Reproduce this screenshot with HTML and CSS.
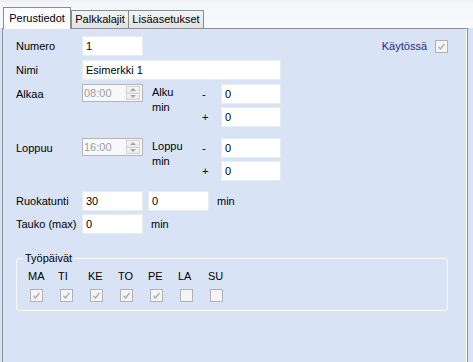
FILE: index.html
```html
<!DOCTYPE html>
<html lang="fi">
<head>
    <meta charset="UTF-8">
    <meta name="viewport" content="width=device-width, initial-scale=1.0">
    <title>Vuoro - Perustiedot</title>
    <link rel="stylesheet" href="styles.css">
</head>
<body>
    <div class="tabs">
        <div class="tab tab-active">Perustiedot</div>
        <div class="tab tab-palkka">Palkkalajit</div>
        <div class="tab tab-lisa">Lisäasetukset</div>
    </div>

    <div class="panel">
        <!-- Numero + Käytössä -->
        <div class="row row-numero">
            <span class="lbl">Numero</span>
            <div class="txt short">1</div>
            <div class="enabled">
                <span>Käytössä</span>
                <span class="chk">
                    <svg viewBox="0 0 11 11"><path d="M2.5 5.8 L4.5 8 L8.5 2.8" fill="none" stroke="#a9a9a9" stroke-width="1.3"/></svg>
                </span>
            </div>
        </div>

        <div class="row row-nimi">
            <span class="lbl">Nimi</span>
            <div class="txt long">Esimerkki 1</div>
        </div>

        <!-- Alkaa -->
        <div class="time-row time-alkaa">
            <span class="lbl">Alkaa</span>
            <div class="spin">
                <span>08:00</span>
                <div class="spin-btns">
                    <span class="spin-up"></span>
                    <span class="spin-down"></span>
                </div>
            </div>
            <div class="multi">Alku<br>min</div>
            <div class="pm">
                <div class="pm-row"><span class="sign">-</span><div class="txt mid">0</div></div>
                <div class="pm-row"><span class="sign">+</span><div class="txt mid">0</div></div>
            </div>
        </div>

        <!-- Loppuu -->
        <div class="time-row time-loppuu">
            <span class="lbl">Loppuu</span>
            <div class="spin">
                <span>16:00</span>
                <div class="spin-btns">
                    <span class="spin-up"></span>
                    <span class="spin-down"></span>
                </div>
            </div>
            <div class="multi">Loppu<br>min</div>
            <div class="pm">
                <div class="pm-row"><span class="sign">-</span><div class="txt mid">0</div></div>
                <div class="pm-row"><span class="sign">+</span><div class="txt mid">0</div></div>
            </div>
        </div>

        <div class="row row-ruoka">
            <span class="lbl">Ruokatunti</span>
            <div class="txt short">30</div>
            <div class="txt short second">0</div>
            <span class="unit">min</span>
        </div>

        <div class="row row-tauko">
            <span class="lbl">Tauko (max)</span>
            <div class="txt short">0</div>
            <span class="unit">min</span>
        </div>

        <!-- Työpäivät -->
        <div class="group">
            <span class="legend">Työpäivät</span>
            <div class="days">
                <div class="day"><span>MA</span><span class="chk"><svg viewBox="0 0 11 11"><path d="M2.5 5.8 L4.5 8 L8.5 2.8" fill="none" stroke="#a9a9a9" stroke-width="1.3"/></svg></span></div>
                <div class="day"><span>TI</span><span class="chk"><svg viewBox="0 0 11 11"><path d="M2.5 5.8 L4.5 8 L8.5 2.8" fill="none" stroke="#a9a9a9" stroke-width="1.3"/></svg></span></div>
                <div class="day"><span>KE</span><span class="chk"><svg viewBox="0 0 11 11"><path d="M2.5 5.8 L4.5 8 L8.5 2.8" fill="none" stroke="#a9a9a9" stroke-width="1.3"/></svg></span></div>
                <div class="day"><span>TO</span><span class="chk"><svg viewBox="0 0 11 11"><path d="M2.5 5.8 L4.5 8 L8.5 2.8" fill="none" stroke="#a9a9a9" stroke-width="1.3"/></svg></span></div>
                <div class="day"><span>PE</span><span class="chk"><svg viewBox="0 0 11 11"><path d="M2.5 5.8 L4.5 8 L8.5 2.8" fill="none" stroke="#a9a9a9" stroke-width="1.3"/></svg></span></div>
                <div class="day"><span>LA</span><span class="chk"></span></div>
                <div class="day"><span>SU</span><span class="chk"></span></div>
            </div>
        </div>
    </div>
</body>
</html>
```

FILE: styles.css
```css
html {
    background: #d8e4f6;
}

body {
    margin: 0;
    height: 362px;
    overflow: hidden;
    background: #d8e4f6;
    font-family: "Liberation Sans", Arial, sans-serif;
    font-size: 11px;
    color: #000;
}

/* tab strip */
.tabs {
    display: flex;
    align-items: flex-end;
    height: 28px;
    padding-left: 3px;
    background: linear-gradient(#eeeff1 0, #f3f6fa 4px, #f8fafd 28px);
}

.tab {
    box-sizing: border-box;
    height: 18px;
    line-height: 16px;
    border: 1px solid #898c95;
    border-bottom: none;
    background: linear-gradient(#f4f4f4, #e2e2e2);
    text-align: center;
}

.tab-active {
    position: relative;
    z-index: 1;
    width: 68px;
    height: 22px;
    line-height: 20px;
    margin-bottom: -1px;
    background: #fcfcfc;
}

.tab-palkka {
    width: 58px;
}

.tab-lisa {
    width: 75px;
    border-left: none;
}

/* content panel, runs to the bottom edge */
.panel {
    box-sizing: border-box;
    margin-left: 2px;
    width: 466px;
    height: 334px;
    padding: 7px 0 0 13px;
    border: 1px solid #8d9096;
    border-bottom: none;
    box-shadow: inset -1px 0 #ffffff;
}

.row {
    display: flex;
    align-items: center;
    height: 20px;
}

.row-numero,
.row-nimi {
    margin-bottom: 4px;
}

.row-ruoka {
    margin-bottom: 3px;
}

.lbl {
    width: 66px;
    flex: none;
    line-height: 20px;
    white-space: nowrap;
}

.txt {
    box-sizing: border-box;
    height: 20px;
    line-height: 18px;
    padding-left: 3px;
    border: 1px solid #e6ecf4;
    background: #ffffff;
}

.short {
    width: 61px;
}

.mid {
    width: 60px;
}

.long {
    width: 199px;
}

.second {
    margin-left: 5px;
}

.unit {
    margin-left: 8px;
}

.enabled {
    display: flex;
    align-items: center;
    gap: 8px;
    margin-left: auto;
    margin-right: 19px;
    color: #26287c;
}

/* checkbox */
.chk {
    box-sizing: border-box;
    display: block;
    width: 13px;
    height: 13px;
    border: 1px solid #b2b2b2;
    background: #f4f4f4;
}

.chk svg {
    display: block;
    width: 11px;
    height: 11px;
}

/* time rows */
.time-row {
    display: flex;
    align-items: flex-start;
    height: 43px;
}

.time-alkaa {
    margin-bottom: 11px;
}

.time-loppuu {
    margin-bottom: 10px;
}

.spin {
    box-sizing: border-box;
    display: flex;
    align-items: center;
    justify-content: space-between;
    width: 61px;
    height: 18px;
    padding-left: 1px;
    border: 1px solid #b5b5b5;
    background: #f7f8fa;
    color: #9d9d9d;
}

.spin-btns {
    display: flex;
    flex-direction: column;
    width: 14px;
    height: 14px;
    margin-right: 2px;
}

.spin-up,
.spin-down {
    flex: 1;
    display: flex;
    align-items: center;
    justify-content: center;
    border: 1px solid #d2d2d2;
    background: linear-gradient(#f6f6f6, #e9e9e9);
}

.spin-down {
    border-top: none;
}

.spin-up::after,
.spin-down::after {
    content: "";
    border-left: 3px solid transparent;
    border-right: 3px solid transparent;
}

.spin-up::after {
    border-bottom: 3px solid #a6a6a6;
}

.spin-down::after {
    border-top: 3px solid #a6a6a6;
}

.multi {
    width: 50px;
    margin-left: 9px;
    padding-top: 1px;
    line-height: 15px;
}

.pm {
    display: flex;
    flex-direction: column;
    gap: 3px;
}

.pm-row {
    display: flex;
    align-items: center;
}

.sign {
    width: 19px;
}

/* Työpäivät group */
.group {
    box-sizing: border-box;
    width: 432px;
    height: 53px;
    margin-top: 24px;
    border: 1px solid #f8fafd;
    border-radius: 3px;
}

.legend {
    display: table;
    margin: -7px 0 0 6px;
    padding: 0 2px;
    line-height: 13px;
    background: #d8e4f6;
}

.days {
    display: flex;
    margin-top: 4px;
    padding-left: 11px;
}

.day {
    display: flex;
    flex-direction: column;
    align-items: flex-start;
    width: 30px;
}

.day span:first-child {
    line-height: 14px;
}

.day .chk {
    margin: 6px 0 0 2px;
}
```
